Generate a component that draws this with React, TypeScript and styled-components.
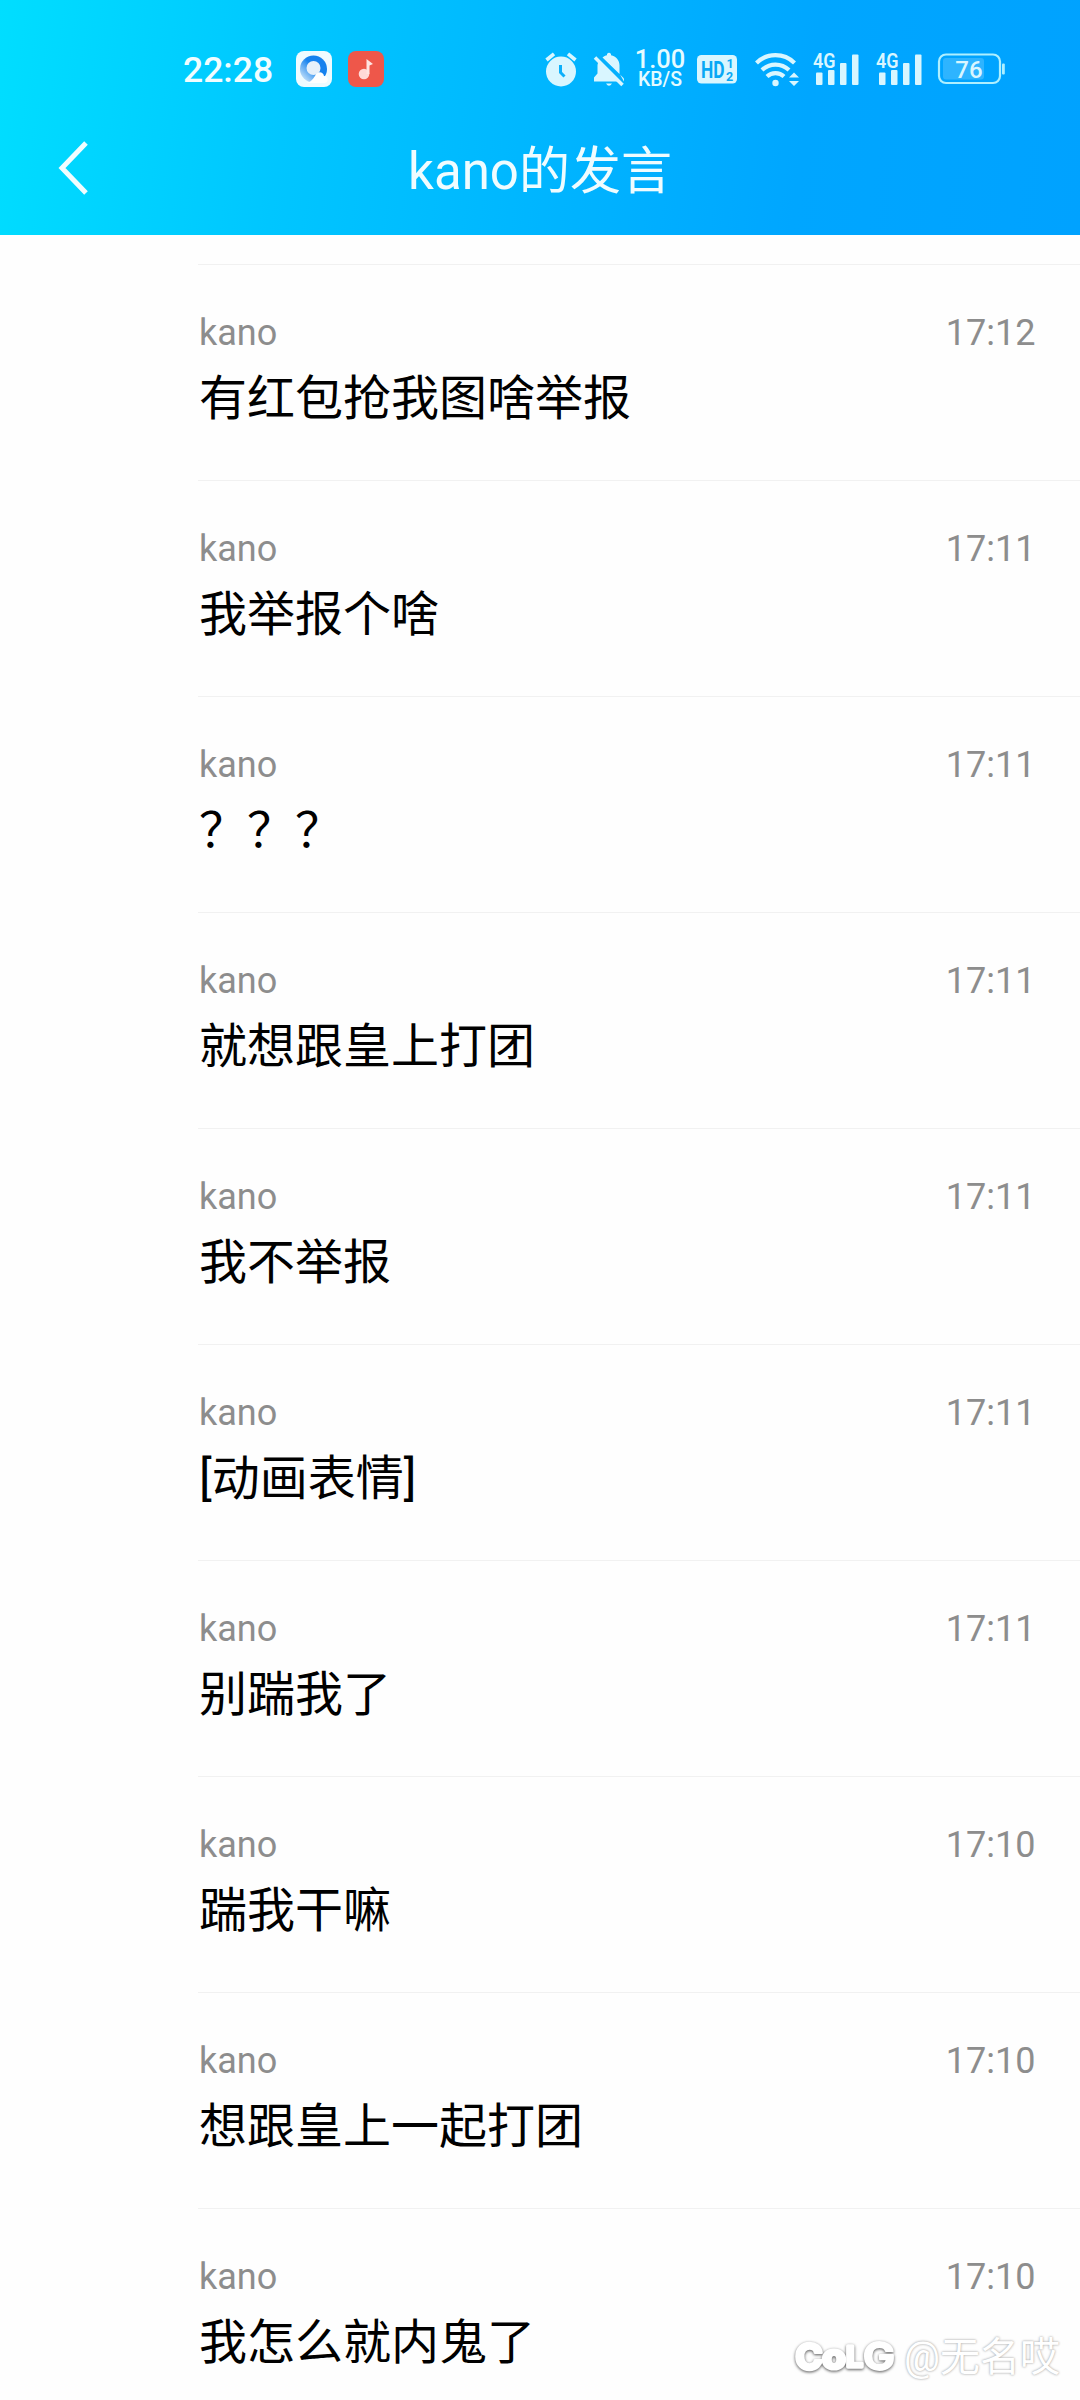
import React from 'react';
import styled, { createGlobalStyle } from 'styled-components';

const Global = createGlobalStyle`
  * { box-sizing: border-box; }
  body { margin: 0; background: #fff; }
`;

const Screen = styled.div`
  position: relative;
  width: 1080px;
  height: 2400px;
  overflow: hidden;
  background: #fefefe;
  font-family: Roboto, 'Noto Sans CJK SC', sans-serif;
`;

const Header = styled.header`
  height: 235px;
  background: linear-gradient(98deg, #00deff 0%, #00c6ff 27%, #00b6ff 50%, #00a6ff 74%, #00a2ff 100%);
`;

const StatusBar = styled.div`
  display: flex;
  align-items: center;
  height: 138px;
  padding-left: 183px;
  color: #d9f6ff;
`;

const Clock = styled.span`
  width: 113px;
  padding-top: 2px;
  font-size: 35.5px;
  font-weight: 500;
  line-height: 42px;
  color: #f1fdff;
`;

const Icon = styled.svg<{ $gap?: number }>`
  display: block;
  flex: none;
  margin-left: ${(p) => p.$gap ?? 0}px;
  overflow: visible;
  font-family: Roboto, sans-serif;
`;

const Speed = styled.div`
  display: flex;
  flex-direction: column;
  align-items: center;
  width: 48px;
  margin-left: 12px;
  font-weight: 500;
  white-space: nowrap;
  color: #e4fbff;
`;

const SpeedValue = styled.span`
  font-size: 25.5px;
  line-height: 21px;
`;

const SpeedUnit = styled.span`
  font-size: 19.5px;
  line-height: 19px;
`;

const TitleBar = styled.div`
  display: grid;
  grid-template-columns: 200px 1fr 200px;
  align-items: center;
  height: 64px;
`;

const BackButton = styled.button`
  display: flex;
  padding: 0 0 6px 58px;
  border: 0;
  background: none;
`;

const Title = styled.h1`
  margin: 0;
  padding-top: 2px;
  font-size: 51px;
  font-weight: 400;
  line-height: 64px;
  text-align: center;
  color: #effcff;
`;

const List = styled.main`
  padding: 29px 0 0 198px;
`;

const Row = styled.article`
  height: 216px;
  padding: 47px 44.5px 0 1px;
  border-top: 1px solid #f1f1f1;
`;

const Meta = styled.div`
  display: flex;
  justify-content: space-between;
  font-size: 36px;
  line-height: 42px;
  color: #8d8d8d;
`;

const Message = styled.p`
  margin: 13px 0 0;
  font-size: 48px;
  line-height: 64px;
  white-space: nowrap;
  color: #000;
`;

const Watermark = styled.div`
  position: absolute;
  right: 20px;
  bottom: 14px;
  display: flex;
  align-items: center;
  gap: 8px;
  color: #fff;
`;

const Author = styled.span`
  font-size: 40px;
  line-height: 56px;
  text-shadow: 0 0 2px #aaa, 0 0 3px #ccc;
`;

const LogoMark = styled(Icon)`
  filter: drop-shadow(0 1px 1.5px #555);
  font-family: Inter, Roboto, sans-serif;
`;

const messages: [string, string][] = [
  ['有红包抢我图啥举报', '17:12'],
  ['我举报个啥', '17:11'],
  ['？？？', '17:11'],
  ['就想跟皇上打团', '17:11'],
  ['我不举报', '17:11'],
  ['[动画表情]', '17:11'],
  ['别踹我了', '17:11'],
  ['踹我干嘛', '17:10'],
  ['想跟皇上一起打团', '17:10'],
  ['我怎么就内鬼了', '17:10'],
];

const BrowserIcon = () => (
  <Icon width="36" height="36" viewBox="0 0 36 36">
    <defs>
      <linearGradient id="ring" x1="1" y1="0" x2="0" y2="1">
        <stop offset="0.45" stopColor="#1682ee" />
        <stop offset="0.95" stopColor="#dceefb" />
      </linearGradient>
    </defs>
    <rect width="36" height="36" rx="8" fill="#effbff" />
    <circle cx="17.5" cy="18" r="13.5" fill="url(#ring)" />
    <circle cx="17.5" cy="17" r="7" fill="#e6f0fa" />
    <path d="M10 32c5-1 7-4 9-7 2-5 8-5 9 0 5 0 5 7 0 7z" fill="#fff" />
  </Icon>
);

const MusicIcon = () => (
  <Icon $gap={16} width="36" height="36" viewBox="0 0 36 36">
    <rect width="36" height="36" rx="8" fill="#ee574a" />
    <circle cx="16" cy="23" r="5.3" fill="#ffd9d8" />
    <path d="M18.500 23V8l6.500 5-3.500 1.500V23z" fill="#ffe4e2" />
  </Icon>
);

const AlarmIcon = () => (
  <Icon $gap={161} width="32" height="35" viewBox="0 0 32 35">
    <circle cx="16" cy="19.500" r="15" fill="currentColor" />
    <path d="M1.500 8 9 1.800M30.500 8 23 1.800" stroke="currentColor" strokeWidth="3.600" fill="none" />
    <path d="M15.500 13v7.500l4 4" stroke="#0bb0fb" strokeWidth="3" fill="none" />
  </Icon>
);

const MutedIcon = () => (
  <Icon $gap={17} width="30" height="35" viewBox="0 0 30 35">
    <path d="M5 10 24.500 29.500H0v-4l3.500-4v-8c0-1.500.5-2.500 1.500-3.500zM8.500 5.500c1.300-1.200 3-2 4.500-2.300V2q2-2.500 4 0v1.200c5 1 8.500 5 8.500 10V22zM12 31.500h6q-3 4.500-6 0z" fill="currentColor" />
    <path d="m1 5.500 27.500 27.500" stroke="currentColor" strokeWidth="3.600" />
    <path d="m4 3.500 26 26" stroke="#05b0fd" strokeWidth="2.500" />
    <path d="M26 22.500l4 4v3z" fill="currentColor" />
  </Icon>
);

const HdIcon = () => (
  <Icon $gap={13} width="40" height="29" viewBox="0 0 40 29">
    <rect width="40" height="28.500" rx="4.500" fill="currentColor" />
    <g fill="#08a8f5" fontWeight="700">
      <text x="4" y="22.500" fontSize="23" textLength="23.500" lengthAdjust="spacingAndGlyphs">HD</text>
      <text x="29.500" y="13" fontSize="12.500">1</text>
      <text x="29" y="25.500" fontSize="12.500">2</text>
    </g>
  </Icon>
);

const WifiIcon = () => (
  <Icon $gap={18} width="44" height="35" viewBox="0 0 44 35">
    <g fill="none" stroke="currentColor" strokeWidth="4.200">
      <path d="M1.500 11a27 27 0 0 1 38 0" />
      <path d="M7 18a19.500 19.500 0 0 1 27 0" />
      <path d="M12 24.500a12.500 12.500 0 0 1 17 0" />
    </g>
    <circle cx="20.500" cy="31" r="3.200" fill="currentColor" />
    <path d="M34 25.500l5-5 5 5zM34 29l5 5 5-5z" fill="currentColor" />
  </Icon>
);

const SignalIcon = ({ gap }: { gap: number }) => (
  <Icon $gap={gap} width="46" height="34" viewBox="0 0 46 34" fill="currentColor">
    <rect x="3" y="20.500" width="6.500" height="12.500" rx="1" />
    <rect x="15" y="18" width="6.500" height="15" rx="1" />
    <rect x="27" y="11" width="6.500" height="22" rx="1" />
    <rect x="39" y="2.500" width="6.500" height="30.500" rx="1" />
    <text x="0" y="15.500" fontSize="21" fontWeight="600" textLength="22.500" lengthAdjust="spacingAndGlyphs">4G</text>
  </Icon>
);

const BatteryIcon = () => (
  <Icon $gap={16} width="67" height="32" viewBox="0 0 67 32">
    <rect x="1" y="1.500" width="61" height="28.500" rx="7" fill="none" stroke="#aeefff" strokeWidth="2.200" />
    <rect x="5" y="5" width="41" height="21.500" rx="3" fill="#fff" fillOpacity="0.18" />
    <rect x="64" y="10.500" width="2.800" height="11" rx="1" fill="#aeefff" />
    <text x="31" y="24.500" fontSize="24" fontWeight="500" textAnchor="middle" fill="currentColor">76</text>
  </Icon>
);

const BackIcon = () => (
  <Icon width="32" height="54" viewBox="0 0 32 54">
    <path d="M28 2 4 27l24 25" fill="none" stroke="#f1fdff" strokeWidth="5" />
  </Icon>
);

const ColgLogo = () => (
  <LogoMark width="102" height="38" viewBox="0 0 102 38">
    <g fill="#fff" stroke="#fff" strokeLinejoin="round">
      <text x="1" y="31" fontSize="37" fontWeight="800" strokeWidth="2.500" textLength="28" lengthAdjust="spacingAndGlyphs">C</text>
      <text x="28" y="30" fontSize="35" fontWeight="800" strokeWidth="3" textLength="24" lengthAdjust="spacingAndGlyphs">o</text>
      <text x="52" y="28" fontSize="28" fontWeight="700" strokeWidth="3.500" textLength="17" lengthAdjust="spacingAndGlyphs">L</text>
      <text x="69" y="31" fontSize="38" fontWeight="700" strokeWidth="1.800" textLength="32" lengthAdjust="spacingAndGlyphs">G</text>
    </g>
  </LogoMark>
);

export default function App() {
  return (
    <Screen>
      <Global />
      <Header>
        <StatusBar>
          <Clock>22:28</Clock>
          <BrowserIcon />
          <MusicIcon />
          <AlarmIcon />
          <MutedIcon />
          <Speed>
            <SpeedValue>1.00</SpeedValue>
            <SpeedUnit>KB/S</SpeedUnit>
          </Speed>
          <HdIcon />
          <WifiIcon />
          <SignalIcon gap={14} />
          <SignalIcon gap={17} />
          <BatteryIcon />
        </StatusBar>
        <TitleBar>
          <BackButton aria-label="返回"><BackIcon /></BackButton>
          <Title>kano的发言</Title>
        </TitleBar>
      </Header>
      <List>
        {messages.map(([text, time]) => (
          <Row key={text}>
            <Meta><span>kano</span><time>{time}</time></Meta>
            <Message>{text}</Message>
          </Row>
        ))}
      </List>
      <Watermark>
        <ColgLogo />
        <Author>@无名哎</Author>
      </Watermark>
    </Screen>
  );
}
